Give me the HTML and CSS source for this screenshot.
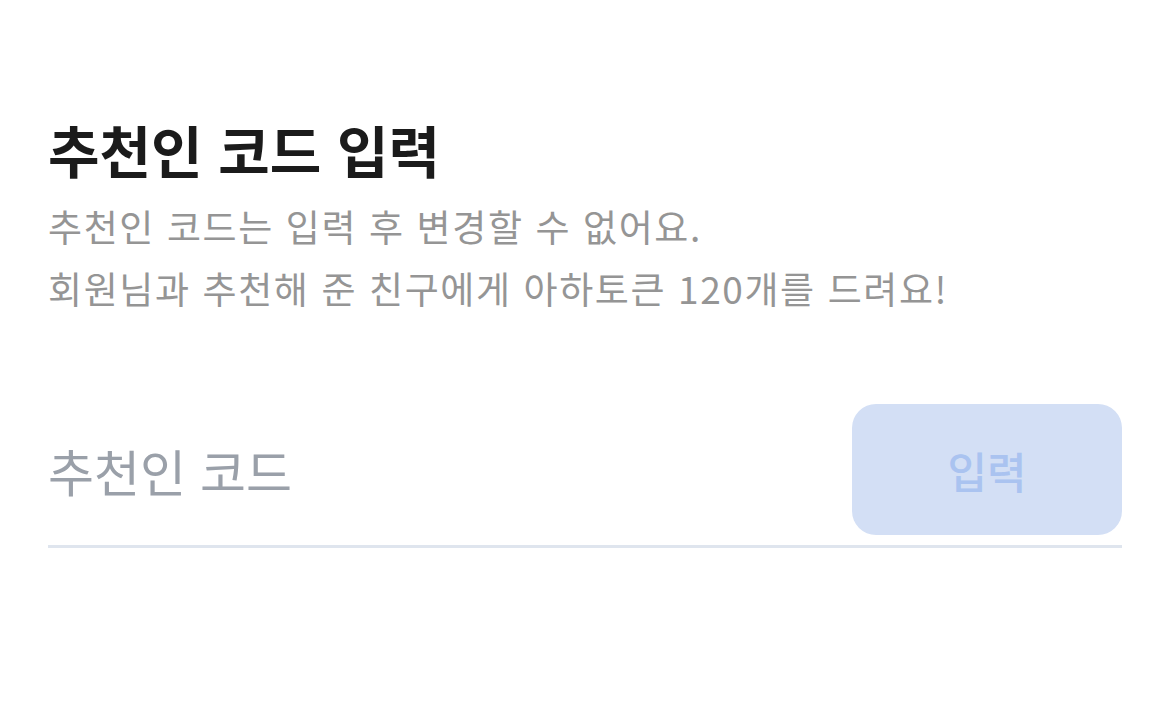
FILE: index.html
```html
<!DOCTYPE html>
<html lang="ko">
<head>
  <meta charset="UTF-8" />
  <meta name="viewport" content="width=device-width, initial-scale=1.0" />
  <title>추천인 코드 입력</title>
  <link rel="stylesheet" href="styles.css">
</head>
<body>
  <div class="page">
    <h1 class="title">추천인 코드 입력</h1>
    <p class="desc">추천인 코드는 입력 후 변경할 수 없어요.<br>회원님과 추천해 준 친구에게 아하토큰 120개를 드려요!</p>

    <div class="code-row">
      <input type="text" class="code-input" placeholder="추천인 코드" />
      <button class="submit-button" disabled>입력</button>
    </div>
  </div>
</body>
</html>
```

FILE: styles.css
```css
body {
  margin: 0;
  background-color: #fff;
  font-family: "Noto Sans CJK KR", "Noto Sans", sans-serif;
}

.page {
  padding: 107px 48px 0;
}

.title {
  margin: 0;
  font-size: 56px;
  font-weight: 700;
  line-height: 84px;
  color: #1b1b1b;
}

.desc {
  margin: 4px 0 0;
  font-size: 37px;
  letter-spacing: 1.6px;
  line-height: 62px;
  color: #959595;
}

.code-row {
  display: flex;
  align-items: center;
  gap: 24px;
  margin-top: 85px;
  padding-bottom: 10px;
  border-bottom: 3px solid #dfe5ee;
}

.code-input {
  flex: 1;
  min-width: 0;
  border: none;
  outline: none;
  padding: 0;
  font-family: inherit;
  font-size: 50px;
  color: #1b1b1b;
  background: transparent;
}

.code-input::placeholder {
  color: #9aa0a9;
}

.submit-button {
  width: 270px;
  height: 131px;
  border: none;
  border-radius: 24px;
  background-color: #d3dff5;
  color: #aac3f0;
  font-family: inherit;
  font-size: 43px;
  font-weight: 500;
}
```
